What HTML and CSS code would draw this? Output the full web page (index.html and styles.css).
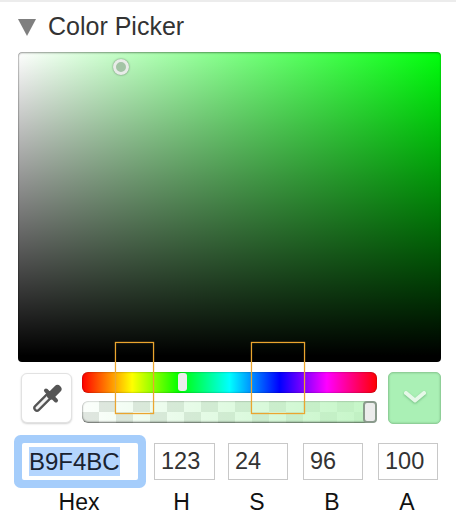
FILE: index.html
```html
<!DOCTYPE html>
<html lang="en">
<head>
    <meta charset="UTF-8">
    <meta name="viewport" content="width=device-width, initial-scale=1.0">
    <title>Color Picker</title>
    <link rel="stylesheet" href="styles.css">
</head>
<body>

    <div class="panel">
        <div class="topline"></div>

        <div class="header">
            <span class="arrow"></span>
            <span class="title">Color Picker</span>
        </div>

        <div class="field">
            <div class="handle"></div>
        </div>

        <div class="controls">
            <button class="dropper" type="button">
                <svg width="36" height="36" viewBox="0 0 36 36">
                    <path d="M21 15L8 28" fill="none" stroke="#555" stroke-width="7.500" stroke-linecap="round"/>
                    <path d="M20 16L8 28" fill="none" stroke="#f4f4f4" stroke-width="3" stroke-linecap="round"/>
                    <path d="M17 10.500L27 20.500" fill="none" stroke="#555" stroke-width="4" stroke-linecap="round"/>
                    <path d="M22 15.500L28.500 9" fill="none" stroke="#555" stroke-width="8" stroke-linecap="round"/>
                </svg>
            </button>

            <div class="sliders">
                <div class="hue">
                    <div class="hue-thumb"></div>
                </div>
                <div class="alpha">
                    <div class="alpha-thumb"></div>
                </div>
            </div>

            <button class="swatch" type="button">
                <svg class="chevron" width="24" height="14" viewBox="0 0 24 14">
                    <path d="M3 3l9 7.500 9-7.500" fill="none" stroke="#e6f8e8" stroke-width="4" stroke-linecap="round" stroke-linejoin="round"/>
                </svg>
            </button>
        </div>

        <div class="inputs">
            <div class="col col-hex">
                <div class="box box-hex"><span class="selected">B9F4BC</span></div>
                <div class="label">Hex</div>
            </div>
            <div class="col col-h">
                <div class="box">123</div>
                <div class="label label-h">H</div>
            </div>
            <div class="col">
                <div class="box">24</div>
                <div class="label">S</div>
            </div>
            <div class="col">
                <div class="box">96</div>
                <div class="label">B</div>
            </div>
            <div class="col">
                <div class="box">100</div>
                <div class="label">A</div>
            </div>
        </div>

        <!-- orange guide boxes lying over the sliders -->
        <div class="guide guide-left"></div>
        <div class="guide guide-right"></div>
    </div>

</body>
</html>
```

FILE: styles.css
```css
html, body {
    margin: 0;
    padding: 0;
    background-color: #fff;
}
.panel {
    position: relative;
    width: 456px;
    height: 524px;
    overflow: hidden;
    font-family: "Liberation Sans", Arial, sans-serif;
    color: #222;
}
.topline {
    height: 2px;
    background-color: #ececec;
}
.header {
    display: flex;
    align-items: center;
    height: 50px;
    padding-left: 18px;
}
.arrow {
    width: 0;
    height: 0;
    margin-right: 12px;
    border-left: 9.500px solid transparent;
    border-right: 9.500px solid transparent;
    border-top: 17px solid #7f7f7f;
}
.title {
    font-size: 25px;
    color: #333;
    position: relative;
    top: -1px;
}
.field {
    position: relative;
    height: 310px;
    margin: 0 15px 0 18px;
    border-radius: 4px;
    background-image:
        linear-gradient(to top, #000 2%, rgba(0, 0, 0, 0)),
        linear-gradient(to right, #fff, #00ff0c);
    box-shadow: inset 0 1px 2px rgba(0, 0, 0, 0.4), inset 1px 0 1px rgba(0, 0, 0, 0.15);
}
.handle {
    position: absolute;
    left: 95px;
    top: 7px;
    width: 10px;
    height: 10px;
    border: 3px solid #e8ece8;
    border-radius: 50%;
    background-color: #a3c4a5;
    box-shadow: 0 0 2px rgba(0, 0, 0, 0.5);
}
.controls {
    display: flex;
    align-items: flex-start;
    height: 71px;
    padding: 10px 15px 0 21px;
    box-sizing: border-box;
}
.dropper {
    display: flex;
    align-items: center;
    justify-content: center;
    width: 51px;
    height: 50px;
    margin-top: 1px;
    padding: 0;
    border: 1px solid #e2e2e2;
    border-radius: 6px;
    background-color: #fff;
    box-shadow: 0 1px 2px rgba(0, 0, 0, 0.18);
}
.sliders {
    width: 295px;
    margin-left: 10px;
}
.hue {
    position: relative;
    height: 21px;
    border-radius: 6px;
    background-image: linear-gradient(to right, #f00 0%, #ff0 17%, #0f0 33%, #0ff 50%, #00f 67%, #f0f 83%, #f00 100%);
    box-shadow: inset 0 0 2px rgba(0, 0, 0, 0.45);
}
.hue-thumb {
    position: absolute;
    left: 96px;
    top: 1px;
    width: 9px;
    height: 18px;
    border-radius: 3px;
    background-color: #ececec;
}
.alpha {
    position: relative;
    height: 22px;
    margin-top: 8px;
    border-radius: 6px;
    background-color: #fff;
    background-image:
        linear-gradient(to right, rgba(185, 244, 188, 0.05), rgba(185, 244, 188, 0.85)),
        conic-gradient(#e2e5e2 25%, #fff 0 50%, #e2e5e2 0 75%, #fff 0);
    background-size: 100% 100%, 34px 22px;
    box-shadow: inset 0 -1px 2px rgba(0, 0, 0, 0.5), inset 0 0 2px rgba(0, 0, 0, 0.35);
}
.alpha-thumb {
    position: absolute;
    right: 0;
    top: 0;
    width: 10px;
    height: 18px;
    border: 2px solid #8a9a8c;
    border-radius: 4px;
    background-color: #ececec;
}
.swatch {
    display: flex;
    align-items: center;
    justify-content: center;
    width: 53px;
    height: 52px;
    margin-left: 11px;
    padding: 0 0 3px;
    border: 1px solid #8fcf98;
    border-radius: 5px;
    background-color: #aaf0b5;
    box-shadow: inset 0 0 2px rgba(60, 120, 70, 0.4);
}
.chevron {
    filter: drop-shadow(0 1px 1px rgba(60, 140, 80, 0.5));
}
.inputs {
    display: flex;
    padding-left: 22px;
    margin-top: 10px;
}
.col {
    display: flex;
    flex-direction: column;
    align-items: center;
    width: 60px;
    margin-right: 15px;
}
.col-hex {
    width: 116px;
    margin-right: 16px;
}
.col-h {
    width: 61px;
    margin-right: 13px;
}
.box {
    display: flex;
    align-items: center;
    width: 100%;
    height: 37px;
    box-sizing: border-box;
    padding-left: 6px;
    border: 1px solid #c8c8c8;
    background-color: #fff;
    font-size: 23.500px;
    color: #333;
}
.box-hex {
    padding-left: 7px;
    border: none;
    border-radius: 2px;
    box-shadow: 0 0 0 8px #a5cdfb;
    font-size: 24px;
    color: #1a2230;
}
.selected {
    background-color: #b4d5fe;
    line-height: 29px;
}
.label {
    margin-top: 8px;
    padding-right: 2px;
    font-size: 23px;
    line-height: 28px;
    color: #111;
}
.label-h {
    padding-right: 6px;
}
.guide {
    position: absolute;
    top: 342px;
    height: 70px;
    border: 1px solid #eba52f;
    box-shadow: 0 0 1px #eba52f, inset 0 0 1px #eba52f;
}
.guide-left {
    left: 115px;
    width: 37px;
}
.guide-right {
    left: 251px;
    width: 52px;
}
```
